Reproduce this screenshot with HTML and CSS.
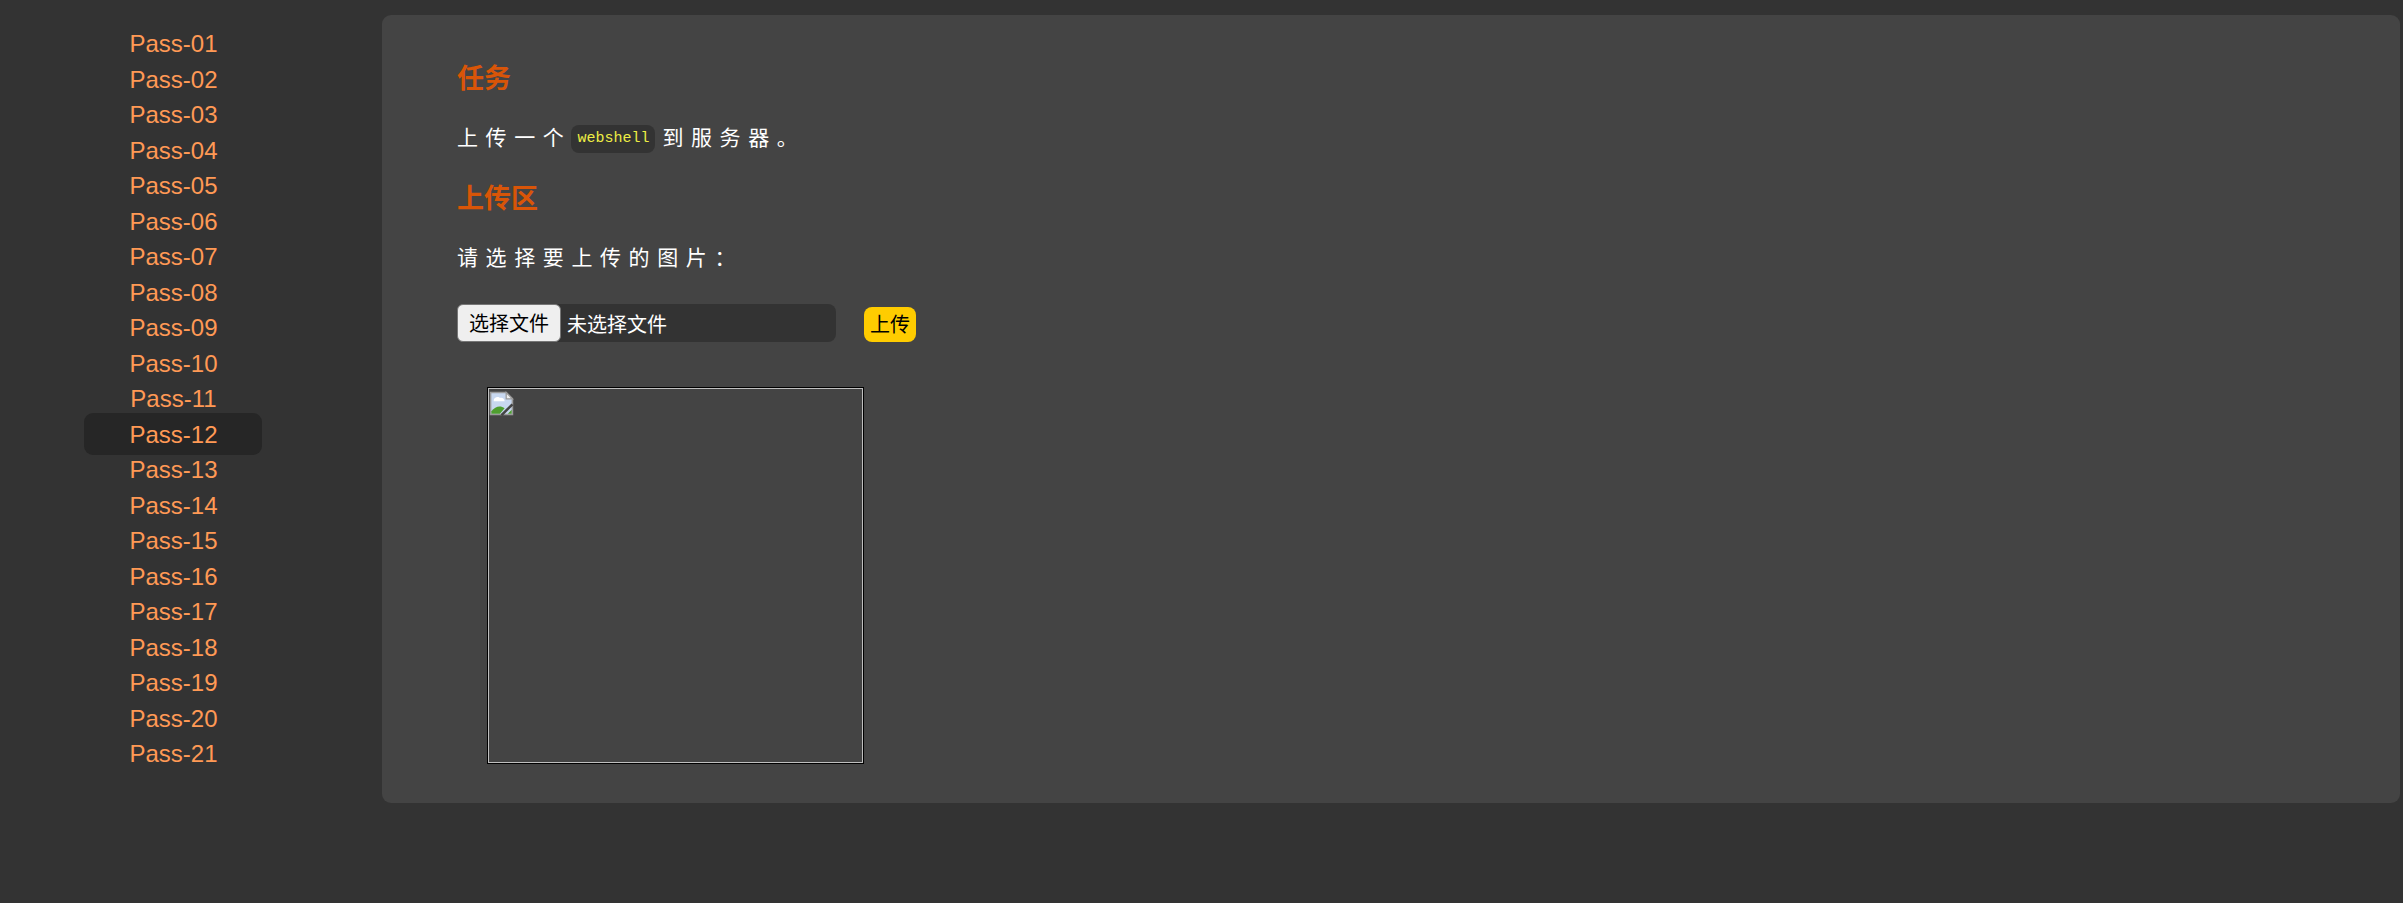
FILE: index.html
```html
<!DOCTYPE html>
<html lang="zh-CN">
  <head>
    <meta charset="utf-8">
    <title>Upload Labs</title>
    <link rel="stylesheet" href="styles.css">
  </head>
  <body>
    <div class="page">
      <ul class="menu">
        <li><a href="#">Pass-01</a></li>
        <li><a href="#">Pass-02</a></li>
        <li><a href="#">Pass-03</a></li>
        <li><a href="#">Pass-04</a></li>
        <li><a href="#">Pass-05</a></li>
        <li><a href="#">Pass-06</a></li>
        <li><a href="#">Pass-07</a></li>
        <li><a href="#">Pass-08</a></li>
        <li><a href="#">Pass-09</a></li>
        <li><a href="#">Pass-10</a></li>
        <li><a href="#">Pass-11</a></li>
        <li><a href="#" class="active">Pass-12</a></li>
        <li><a href="#">Pass-13</a></li>
        <li><a href="#">Pass-14</a></li>
        <li><a href="#">Pass-15</a></li>
        <li><a href="#">Pass-16</a></li>
        <li><a href="#">Pass-17</a></li>
        <li><a href="#">Pass-18</a></li>
        <li><a href="#">Pass-19</a></li>
        <li><a href="#">Pass-20</a></li>
        <li><a href="#">Pass-21</a></li>
      </ul>

      <div class="panel">
        <h2 class="first">任务</h2>
        <p>上传一个<code>webshell</code>到服务器。</p>
        <h2>上传区</h2>
        <p>请选择要上传的图片：</p>
        <form class="upload-form">
          <div class="file-box">
            <span class="file-button">选择文件</span>
            <span class="file-name">未选择文件</span>
          </div>
          <button type="button" class="submit-button">上传</button>
        </form>
        <div class="preview">
          <svg class="broken-icon" viewBox="0 0 16 16" width="25" height="25">
            <path d="M1 1H11L15 5V15H1Z" fill="#c8d8f0" stroke="#9a9a9a" stroke-width="1"/>
            <path d="M11 1V5H15Z" fill="#eeeeee" stroke="#9a9a9a" stroke-width="0.8"/>
            <path d="M3 6C3 4 6 3 7 4.500C8.500 4 10 5 10 6.500H3Z" fill="#ffffff"/>
            <path d="M1.500 14.500V13C4 10 7 9 10 11L7 14.500Z" fill="#4f9e2f"/>
            <path d="M12 14.500L14.500 12V14.500Z" fill="#4f9e2f"/>
            <path d="M8 15.500L15 8.500" stroke="#444444" stroke-width="1.600"/>
          </svg>
        </div>
      </div>
    </div>
  </body>
</html>
```

FILE: styles.css
```css
* {
  box-sizing: border-box;
}

body {
  margin: 0;
  background-color: #333333;
  color: #ffffff;
  font-family: "Liberation Sans", "Noto Sans CJK SC", sans-serif;
}

.page {
  display: flex;
  align-items: flex-start;
  height: 903px;
}

.menu {
  flex: 0 0 382px;
  list-style: none;
  margin: 0;
  padding: 26px 120px 0 84px;
}

.menu li {
  display: flow-root;
  height: 35.5px;
}

.menu a {
  display: block;
  margin-top: -3.25px;
  padding: 3.25px 0 3.25px 1px;
  border-radius: 9px;
  color: #ff9955;
  font-size: 24px;
  line-height: 35.5px;
  text-align: center;
  text-decoration: none;
}

.menu a.active {
  background-color: #262626;
}

.panel {
  flex: 1;
  margin: 15px 3px 0 0;
  height: 788px;
  padding: 46px 75px 0;
  background-color: #444444;
  border-radius: 9px;
}

h2 {
  margin: 28px 0 0;
  color: #d95508;
  font-size: 27px;
  line-height: 36px;
}

h2.first {
  margin-top: 0;
}

p {
  margin: 26px 0 0;
  font-size: 21px;
  letter-spacing: 7.600px;
  line-height: 30px;
}

code {
  display: inline-block;
  margin-right: 7px;
  padding: 0 6px;
  background-color: #333333;
  border-radius: 8px;
  color: #eeee44;
  font-family: "Liberation Mono", monospace;
  font-size: 15px;
  letter-spacing: 0;
  line-height: 28px;
  vertical-align: middle;
}

.upload-form {
  display: flex;
  align-items: flex-end;
  margin-top: 31px;
}

.file-box {
  display: flex;
  align-items: center;
  width: 379px;
  height: 38px;
  background-color: #333333;
  border-radius: 8px;
}

.file-button {
  width: 104px;
  height: 38px;
  background-color: #efefef;
  border: 1px solid #767676;
  border-radius: 6px;
  color: #000000;
  font-size: 20px;
  line-height: 38px;
  text-align: center;
}

.file-name {
  margin-left: 6px;
  font-size: 20px;
}

.submit-button {
  width: 52px;
  height: 35px;
  margin-left: 28px;
  padding: 0 0 2px;
  background-color: #ffcc00;
  border: none;
  border-radius: 8px;
  color: #000000;
  font-family: inherit;
  font-size: 20px;
}

.preview {
  width: 377px;
  height: 377px;
  margin: 45px 0 0 30px;
  padding: 3px 1px;
  border: 1px solid #000000;
  outline: 1px solid #c0c0c0;
  outline-offset: -2px;
}

.broken-icon {
  display: block;
}
```
